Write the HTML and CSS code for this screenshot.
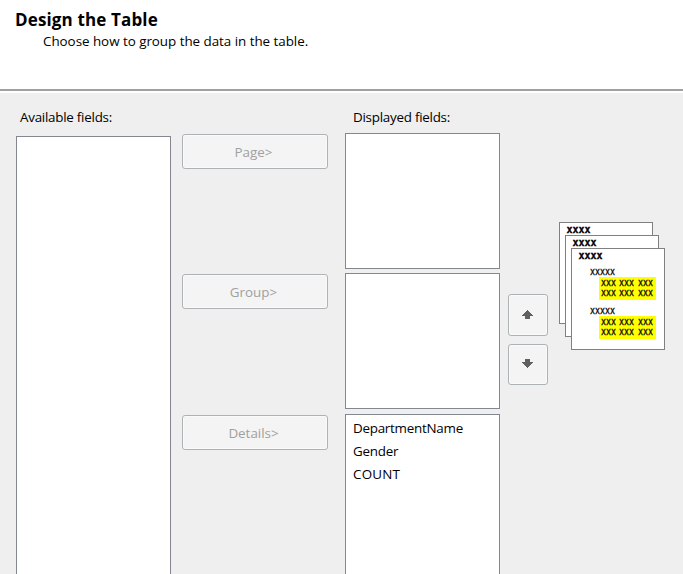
FILE: index.html
```html
<!DOCTYPE html>
<html lang="en">
<head>
<meta charset="utf-8">
<title>Design the Table</title>
<link rel="stylesheet" href="styles.css">
</head>
<body>
<header class="header">
  <h1 class="title">Design the Table</h1>
  <p class="subtitle">Choose how to group the data in the table.</p>
</header>
<main class="content">
  <section class="available">
    <div class="label">Available fields:</div>
    <div class="list"></div>
  </section>
  <div class="actions">
    <button class="button" disabled>Page&gt;</button>
    <button class="button" disabled>Group&gt;</button>
    <button class="button" disabled>Details&gt;</button>
  </div>
  <section class="displayed">
    <div class="label">Displayed fields:</div>
    <div class="list"></div>
    <div class="list"></div>
    <ul class="list details">
      <li>DepartmentName</li>
      <li>Gender</li>
      <li class="count">COUNT</li>
    </ul>
  </section>
  <div class="order">
    <button class="move" aria-label="Move up"><svg width="11" height="9" viewBox="0 0 11 9" shape-rendering="crispEdges"><path d="M5 0h1v1h1v1h1v1h1v1h1v1h1v1H8v3H3V6H0V5h1V4h1V3h1V2h1V1h1z"/></svg></button>
    <button class="move down" aria-label="Move down"><svg width="11" height="9" viewBox="0 0 11 9" shape-rendering="crispEdges"><path d="M3 0h5v3h3v1h-1v1H9v1H8v1H7v1H6v1H5V8H4V7H3V6H2V5H1V4H0V3h3z"/></svg></button>
  </div>
  <svg class="preview" width="106" height="128" viewBox="0 0 106 128">
    <g class="sheet">
      <rect x=".5" y=".5" width="93" height="101"/>
      <rect x="6.5" y="13.5" width="93" height="101"/>
      <rect x="12.5" y="26.5" width="93" height="101"/>
    </g>
    <g class="mark"><rect x="40" y="55" width="57" height="23"/><rect x="40" y="94" width="57" height="23"/></g>
    <g class="sample heading">
      <text x="7.5" y="11" textLength="24" lengthAdjust="spacingAndGlyphs">xxxx</text>
      <text x="13.5" y="24" textLength="24" lengthAdjust="spacingAndGlyphs">xxxx</text>
      <text x="19.5" y="37" textLength="24" lengthAdjust="spacingAndGlyphs">xxxx</text>
    </g>
    <g class="sample">
      <text x="31" y="53" textLength="25" lengthAdjust="spacingAndGlyphs">xxxxx</text>
      <text x="31" y="92" textLength="25" lengthAdjust="spacingAndGlyphs">xxxxx</text>
      <text x="42" y="64" textLength="15" lengthAdjust="spacingAndGlyphs">xxx</text>
      <text x="60" y="64" textLength="15" lengthAdjust="spacingAndGlyphs">xxx</text>
      <text x="79" y="64" textLength="15" lengthAdjust="spacingAndGlyphs">xxx</text>
      <text x="42" y="74" textLength="15" lengthAdjust="spacingAndGlyphs">xxx</text>
      <text x="60" y="74" textLength="15" lengthAdjust="spacingAndGlyphs">xxx</text>
      <text x="79" y="74" textLength="15" lengthAdjust="spacingAndGlyphs">xxx</text>
      <text x="42" y="103" textLength="15" lengthAdjust="spacingAndGlyphs">xxx</text>
      <text x="60" y="103" textLength="15" lengthAdjust="spacingAndGlyphs">xxx</text>
      <text x="79" y="103" textLength="15" lengthAdjust="spacingAndGlyphs">xxx</text>
      <text x="42" y="113" textLength="15" lengthAdjust="spacingAndGlyphs">xxx</text>
      <text x="60" y="113" textLength="15" lengthAdjust="spacingAndGlyphs">xxx</text>
      <text x="79" y="113" textLength="15" lengthAdjust="spacingAndGlyphs">xxx</text>
    </g>
  </svg>
</main>
</body>
</html>
```
FILE: styles.css
```css
* { box-sizing: border-box; }
body {
  margin: 0;
  height: 574px;
  overflow: hidden;
  display: flex;
  flex-direction: column;
  background: #efefef;
  color: #000;
  font: 13.4px/20px "Open Sans", "Noto Sans", sans-serif;
}
.header {
  height: 93px;
  flex: none;
  padding: 8px 15px 0;
  background: linear-gradient(#a0a0a0, #a0a0a0) 0 89px / 100% 2px no-repeat #fff;
}
.title { margin: 0; font-size: 17px; line-height: 24px; letter-spacing: .14px; }
.subtitle { margin: -1px 0 0 28px; letter-spacing: -.03px; }
.content {
  flex: none;
  height: 481px;
  padding-left: 16px;
  display: grid;
  grid-template-columns: 155px 146px 155px 40px 106px;
  column-gap: 11px;
  align-items: start;
}
.available, .displayed { display: flex; flex-direction: column; height: 481px; letter-spacing: -.25px; }
.label { flex: none; height: 43px; padding: 14px 4px 0; }
.list { flex: 1; margin: 0; padding: 0; background: #fff; border: 1px solid #828790; }
.available .list { border-bottom: 0; }
.actions { display: flex; flex-direction: column; padding-top: 41px; }
.button {
  height: 35px;
  margin: 0 0 105px;
  padding: 0 3px 0 0;
  font: inherit;
  color: #a0a0a0;
  background: #f4f4f4;
  border: 1px solid #adb2b5;
  border-radius: 3px;
  box-shadow: inset 0 0 0 1px #fafafa;
}
.button:nth-child(2) { margin-bottom: 106px; }
.displayed { margin-left: 6px; width: 155px; }
.displayed .label { height: 40px; padding-left: 8px; }
.displayed .list { flex: none; height: 136px; margin-bottom: 4px; }
.displayed .details { flex: 1; margin: 1px 0 0; padding: 2px 7px; border-bottom: 0; list-style: none; line-height: 23px; }
.count { letter-spacing: .2px; }
.order { margin-left: 3px; padding-top: 201px; display: flex; flex-direction: column; gap: 8px; width: 40px; }
.move {
  height: 42px;
  padding: 0 2px 1px 0;
  display: flex;
  align-items: center;
  justify-content: center;
  background: #f4f4f4;
  border: 1px solid #adb2b5;
  border-radius: 3px;
  box-shadow: inset 0 0 0 1px #fafafa;
}
.move.down { height: 41px; padding-bottom: 2px; }
.move path { fill: #606060; }
.preview { display: block; margin: 129px 0 0 3px; }
.sheet rect { fill: #fff; stroke: #808080; }
.mark rect { fill: #ff0; }
.sample { font: 11px "DejaVu Sans Mono", monospace; fill: #000; stroke: #000; stroke-width: .3px; }
.heading { font-weight: bold; }
```
